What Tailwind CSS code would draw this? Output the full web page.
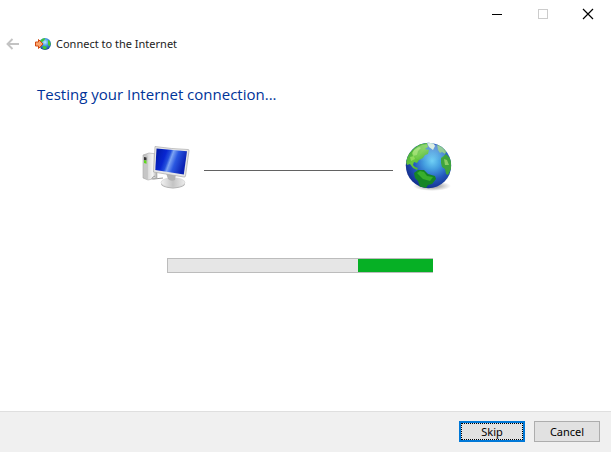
<!DOCTYPE html>
<html lang="en">
<head>
<meta charset="utf-8">
<meta name="viewport" content="width=device-width, initial-scale=1">
<title>Connect to the Internet</title>
<script src="https://cdn.jsdelivr.net/npm/@tailwindcss/browser@4"></script>
</head>
<body class="flex min-h-screen flex-col bg-white font-['Noto_Sans','Open_Sans',sans-serif] text-[11px] text-black">
  <header>
    <div class="flex h-7 justify-end">
      <button type="button" aria-label="Minimize" class="flex w-[46px] items-center justify-center">
        <svg class="size-3" viewBox="0 0 12 12" fill="none" stroke="#000" shape-rendering="crispEdges"><path d="M1 6.500h10"/></svg>
      </button>
      <button type="button" aria-label="Maximize" disabled class="flex w-[45px] items-center justify-center">
        <svg class="size-3" viewBox="0 0 12 12" fill="none" stroke="#ccc" shape-rendering="crispEdges"><path d="M1.500 1.500h9v9h-9z"/></svg>
      </button>
      <button type="button" aria-label="Close" class="flex w-[46px] items-center justify-center">
        <svg class="size-3" viewBox="0 0 12 12" fill="none" stroke="#000" stroke-width="1.200"><path d="M1 1l10 10M11 1L1 11"/></svg>
      </button>
    </div>
    <div class="flex h-8 items-center pl-1.5">
      <button type="button" aria-label="Back" disabled class="mr-4">
        <svg class="h-3 w-[13px]" viewBox="0 0 13 12" fill="none" stroke="#c3c3c3" stroke-width="1.900"><path d="M13 6H1.500M6.500 1l-5 5 5 5"/></svg>
      </button>
      <svg class="mr-[5px] h-4 w-4" viewBox="0 0 16 16" aria-hidden="true">
        <defs><radialGradient id="small-sea" cx=".5" cy=".35" r=".65"><stop offset="0" stop-color="#c0ecff"/><stop offset=".5" stop-color="#3b91de"/><stop offset="1" stop-color="#173b9b"/></radialGradient></defs>
        <circle cx="10" cy="8" r="6" fill="url(#small-sea)"/>
        <path d="M5.500 4.500Q8 1.800 10 2.200L9.500 4 7.500 5.500 6.500 7 5 7ZM13 4l1.500 1 1.300 3-1.300 2.500-1.500-2ZM8 10l2.500.3 1.500 1.500-2 2-2.500-1.500Z" fill="#42c829"/>
        <path d="M.5 6H3.500V3.500L8 8 3.500 12.500V10H.5Z" fill="#fba66e" stroke="#d2480f"/>
      </svg>
      <h1 class="leading-4 text-[#222]">Connect to the Internet</h1>
    </div>
  </header>

  <main class="flex-1 pt-6">
    <h2 class="px-[37px] font-['Open_Sans','Noto_Sans',sans-serif] text-[15px] leading-5 text-[#003399]">Testing your Internet connection...</h2>

    <div class="mt-9 flex items-center pr-[158px] pl-[142px]">
      <svg class="h-[50px] w-12" viewBox="0 0 48 50" role="img" aria-label="This computer">
        <defs>
          <linearGradient id="screen" x1="0" y1="0" x2="1" y2=".3"><stop offset="0" stop-color="#0018a0"/><stop offset=".35" stop-color="#0826d0"/><stop offset=".48" stop-color="#2450dc"/><stop offset=".56" stop-color="#7da4f3"/><stop offset=".72" stop-color="#2a57e0"/><stop offset="1" stop-color="#0b22b4"/></linearGradient>
          <linearGradient id="tower"><stop offset="0" stop-color="#a6a6a6"/><stop offset=".4" stop-color="#dedede"/><stop offset=".7" stop-color="#f5f5f5"/><stop offset="1" stop-color="#aaa"/></linearGradient>
          <linearGradient id="stand"><stop offset="0" stop-color="#f2f2f2"/><stop offset=".5" stop-color="#c4c4c4"/><stop offset="1" stop-color="#ededed"/></linearGradient>
        </defs>
        <path d="M1 14l6-2 8 1v24l-9 2-5-2Z" fill="url(#tower)" stroke="#aaa" stroke-width=".6"/>
        <path d="M1.300 14.300l4.500 1V38.500l-4.500-2Z" fill="#c6c6c6"/>
        <path d="M2 16l2.500.6v3L2 19Z" fill="#333"/>
        <path d="M2 19l2.500.7v3L2 22Z" fill="#5fd81c"/>
        <path d="M13 35q-6 3-1 3l9-1" fill="none" stroke="#999"/>
        <ellipse cx="31" cy="42.500" rx="12" ry="5" fill="#aaa"/>
        <ellipse cx="31" cy="41.500" rx="12" ry="4.800" fill="url(#stand)" stroke="#d4d4d4" stroke-width=".6"/>
        <path d="M24 32l10 1-1 6q-4 2-7-1Z" fill="#b2b2b2"/>
        <path d="M13 5.500Q30 8 46 8.500q1.200 0 1 1.300L43.500 35q-.2 1.200-1.500 1L11.500 31Z" fill="#e6e6e6" stroke="#aaa" stroke-width=".7"/>
        <path d="M14.500 7.500L45 10.200 41.800 33.500 13.300 29Z" fill="url(#screen)"/>
      </svg>
      <div class="mt-2 mr-3 ml-[14px] h-px flex-1 bg-[#626262]"></div>
      <svg class="h-[52px] w-12" viewBox="0 0 48 52" role="img" aria-label="Internet">
        <defs>
          <radialGradient id="sea" cx=".58" cy=".4" r=".62"><stop offset="0" stop-color="#6fd0f5"/><stop offset=".3" stop-color="#459fe0"/><stop offset=".65" stop-color="#2458bd"/><stop offset="1" stop-color="#142f8e"/></radialGradient>
          <radialGradient id="shadow"><stop offset=".4" stop-color="#666" stop-opacity=".5"/><stop offset="1" stop-color="#777" stop-opacity="0"/></radialGradient>
          <linearGradient id="gloss" x1="0" y1="0" x2="0" y2="1"><stop offset="0" stop-color="#fff" stop-opacity=".3"/><stop offset="1" stop-color="#fff" stop-opacity="0"/></linearGradient>
          <linearGradient id="land" x1="0" y1="0" x2="1" y2="1"><stop offset="0" stop-color="#2f9b3c"/><stop offset=".5" stop-color="#68c83c"/><stop offset="1" stop-color="#2d9a34"/></linearGradient>
          <clipPath id="ball"><circle cx="23.500" cy="25.500" r="22.700"/></clipPath>
        </defs>
        <ellipse cx="27" cy="46" rx="19" ry="5" fill="url(#shadow)"/>
        <circle cx="23.500" cy="25.500" r="22.700" fill="url(#sea)"/>
        <g clip-path="url(#ball)">
          <path d="M1 22L3 14 9 8l6-4 7-1 1 4-3 2 4 1-1 4-3 1-2 3-4 2-2 3-3-1-1 3 2 2 3 1-1 2-4-2-3-4-3 1Z" fill="url(#land)"/>
          <path d="M9 10l5-3 2 1-3 3-1 4-4 1-1-3ZM5 17l4-1 1 3-4 2Z" fill="#8fda5c"/>
          <path d="M22 3l6-1 2 4-2 4-4-3Z" fill="#cfe9da"/>
          <path d="M32 4l5 2 5 5-2 3-3-2-2 1-2-3Z" fill="#78bd80"/>
          <path d="M36 18l5-4 5 5v10l-3 6-2-1-1-5-3-2-1-4Z" fill="#3fa43c"/>
          <path d="M39 19l3 1 2 5-4 0Z" fill="#8bcd65"/>
          <path d="M9 33l4-3 6 0 4 4 7 2 1 3-4 5-4 1-2 3-6-1-2-6-3-3Z" fill="#168525"/>
          <path d="M12 33l3-2 4 1 3 4 6 1-3 4-7-2Z" fill="#38ae2c"/>
        </g>
        <ellipse cx="24" cy="13" rx="16" ry="9" fill="url(#gloss)"/>
      </svg>
    </div>

    <div class="mt-[66px] pr-[178px] pl-[167px]">
      <div role="progressbar" aria-label="Testing your Internet connection" class="flex h-[15px] justify-end border border-r-0 border-[#bcbcbc] bg-[#e6e6e6]">
        <div class="w-[75px] bg-[#06b025]"></div>
      </div>
    </div>
  </main>

  <footer class="flex justify-end gap-[9px] border-t border-[#dfdfdf] bg-[#f0f0f0] pt-[9px] pr-[11px] pb-[10px]">
    <button type="button" class="h-[21px] w-[66px] border-2 border-[#0078d7] bg-[#e1e1e1] leading-4 outline-1 -outline-offset-3 outline-dotted outline-black">Skip</button>
    <button type="button" class="h-[21px] w-[66px] border border-[#adadad] bg-[#e1e1e1] leading-4">Cancel</button>
  </footer>
</body>
</html>
